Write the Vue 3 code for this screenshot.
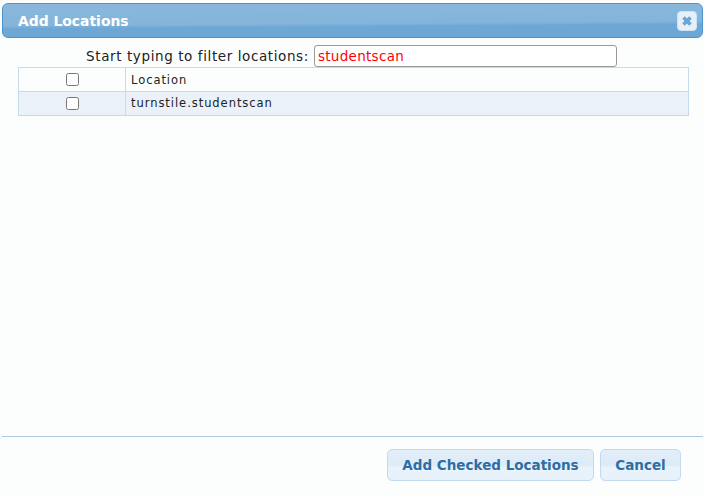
<template>
  <div class="dialog">
    <div class="titlebar">
      <span class="title">Add Locations</span>
      <button class="close" type="button">
        <svg width="12" height="12" viewBox="0 0 12 12">
          <path d="M2.5 2.5 L9.5 9.5 M9.5 2.5 L2.5 9.5" stroke="#6aa5d6" stroke-width="3.6" />
        </svg>
      </button>
    </div>

    <div class="content">
      <div class="filter">
        <label class="filter-label" for="filter">Start typing to filter locations:</label>
        <input id="filter" v-model="filter" class="filter-input" type="text" />
      </div>

      <table class="grid">
        <tbody>
          <tr v-for="row in rows" :key="row.name" :class="{ alt: row.alt }">
            <td class="check"><input type="checkbox" /></td>
            <td class="name">{{ row.name }}</td>
          </tr>
        </tbody>
      </table>
    </div>

    <div class="footer">
      <button class="btn add" type="button">Add Checked Locations</button>
      <button class="btn cancel" type="button">Cancel</button>
    </div>
  </div>
</template>

<script setup>
  import { ref } from 'vue';

  const filter = ref('studentscan');

  const rows = [
    { name: 'Location', alt: false },
    { name: 'turnstile.studentscan', alt: true }
  ];
</script>

<style scoped>
  .dialog {
    background: #fcfefe;
    box-sizing: border-box;
    display: flex;
    flex-direction: column;
    font-family: "DejaVu Sans", sans-serif;
    height: 497px;
    padding: 3px 2px 0;
    width: 705px;
  }

  .titlebar {
    align-items: center;
    background:
      linear-gradient(179.6deg, #8ab8dc 0%, #84b4da 58%, #6ca7d5 66%, #6ca7d5 100%);
    border: 1px solid #4d94cf;
    border-radius: 6px;
    box-sizing: border-box;
    display: flex;
    height: 35px;
    justify-content: space-between;
    padding: 0 5px 0 15px;
  }

  .title {
    color: #fff;
    font-size: 13.9px;
    font-weight: bold;
  }

  .close {
    align-items: center;
    background: #e6f0f9;
    border: 1px solid #cfe2f2;
    border-radius: 4px;
    display: flex;
    height: 20px;
    justify-content: center;
    padding: 0;
    width: 20px;
  }

  .content {
    flex: 1;
    padding: 7px 14px 0 16px;
  }

  .filter {
    align-items: center;
    display: flex;
    height: 22px;
    justify-content: center;
    margin-left: -4px;
  }

  .filter-label {
    color: #222;
    font-size: 13.5px;
    letter-spacing: 0.6px;
    margin-right: 5px;
  }

  .filter-input {
    border: 1px solid #9a9a9a;
    border-radius: 3px;
    box-sizing: border-box;
    color: #f00;
    font-family: "DejaVu Sans", sans-serif;
    font-size: 13.5px;
    height: 22px;
    letter-spacing: 0.3px;
    outline: none;
    padding: 0 3px;
    width: 303px;
  }

  .grid {
    border-collapse: collapse;
    table-layout: fixed;
    width: 671px;
  }

  .grid td {
    border: 1px solid #c5daee;
    box-sizing: border-box;
    color: #222;
    font-size: 11.5px;
    height: 24px;
    letter-spacing: 0.95px;
    padding: 0 5px;
  }

  .grid .alt .name {
    padding-bottom: 1px;
  }

  .grid .check {
    padding: 0;
    text-align: center;
    width: 107px;
  }

  .check input {
    display: block;
    height: 13px;
    margin: 0 auto;
    width: 13px;
  }

  .alt td {
    background: #eaf1f9;
  }

  .footer {
    align-items: flex-start;
    border-top: 1px solid #acc9e4;
    box-sizing: border-box;
    display: flex;
    gap: 6px;
    height: 61px;
    justify-content: flex-end;
    padding: 12px 22px 0 0;
  }

  .btn {
    background: linear-gradient(#e3eff9 0%, #dcebf8 50%, #eaf3fb 58%, #e6f1fa 100%);
    border: 1px solid #c2d9ee;
    border-radius: 5px;
    color: #2e6da4;
    font-family: "DejaVu Sans", sans-serif;
    font-size: 13.5px;
    font-weight: bold;
    height: 32px;
    padding: 0;
  }

  .add {
    width: 207px;
  }

  .cancel {
    width: 81px;
  }
</style>

<style>
  html, body {
    background: #fcfefe;
    margin: 0;
    overflow: hidden;
  }
</style>
